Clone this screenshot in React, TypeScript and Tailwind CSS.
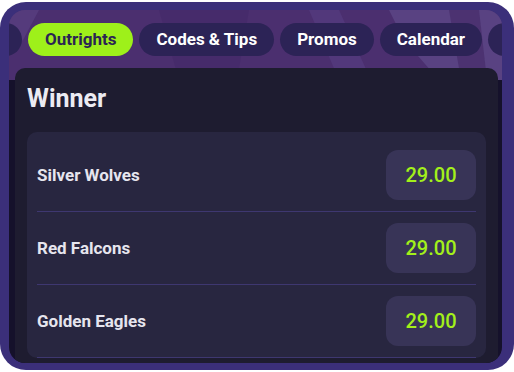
import React from 'react'

const tabs = ['Outrights', 'Codes & Tips', 'Promos', 'Calendar']
const teams = ['Silver Wolves', 'Red Falcons', 'Golden Eagles']

function HeaderShapes() {
  return (
    <svg className="absolute left-0 top-0" width="493" height="70" viewBox="0 0 493 70">
      <polygon points="0,0 30,0 14,30 0,40" fill="#5b4585" opacity="0.6" />
      <polygon points="150,0 240,0 228,70 170,70" fill="#44296a" opacity="0.7" />
      <polygon points="300,0 330,0 362,70 330,70" fill="#553c80" opacity="0.7" />
      <polygon points="380,0 493,0 493,70 430,70 395,30" fill="#5e4a88" opacity="0.75" />
      <polygon points="440,0 470,0 478,70 452,70" fill="#4a316f" opacity="0.9" />
    </svg>
  )
}

export default function App() {
  return (
    <div className="w-[514px] h-[372px] bg-white pt-[2px]" style={{ fontFamily: 'Roboto, "Noto Sans", sans-serif' }}>
      <div className="h-[368px] rounded-[26px] bg-[#3b2f7a] pl-[9px] pr-[12px] pt-[8px] pb-[7px]">
        <div className="relative h-full overflow-hidden rounded-[16px] bg-[linear-gradient(to_bottom,#4b2f6f_0_70px,#15112b_70px)] flex flex-col">
          <HeaderShapes />
          <div className="relative flex gap-[6px] pt-[13px] h-[58px] shrink-0">
            <div className="-ml-[47px] w-[60px] h-[33px] rounded-full bg-[#2c2356] shrink-0" />
            {tabs.map((t, i) => (
              <div
                key={t}
                className={`h-[33px] px-[17px] rounded-full flex items-center shrink-0 text-[17px] font-bold ${i === 0 ? 'bg-[#9ef01a] text-[#2b2454]' : 'bg-[#2c2356] text-white'}`}
              >
                {t}
              </div>
            ))}
            <div className="w-[60px] h-[33px] rounded-full bg-[#2c2356] shrink-0" />
          </div>
          <div className="relative flex-1 ml-[6px] mr-[4px] rounded-t-[10px] bg-[#1e1c30] px-[12px] pt-[15px]">
            <div className="text-[25px] font-bold text-[#ecebf2] leading-[32px]">Winner</div>
            <div className="mt-[17px] rounded-[10px] bg-[#282640] px-[10px] pt-[7px]">
              {teams.map(t => (
                <div key={t} className="flex items-center justify-between py-[11px] border-b border-[#3e3770]">
                  <span className="text-[17px] font-bold text-[#e6e5ee] pt-[2px]">{t}</span>
                  <div className="w-[90px] h-[50px] rounded-[12px] bg-[#383457] flex items-center justify-center text-[20px] font-medium text-[#a3f01a]">
                    29.00
                  </div>
                </div>
              ))}
            </div>
          </div>
        </div>
      </div>
    </div>
  )
}
